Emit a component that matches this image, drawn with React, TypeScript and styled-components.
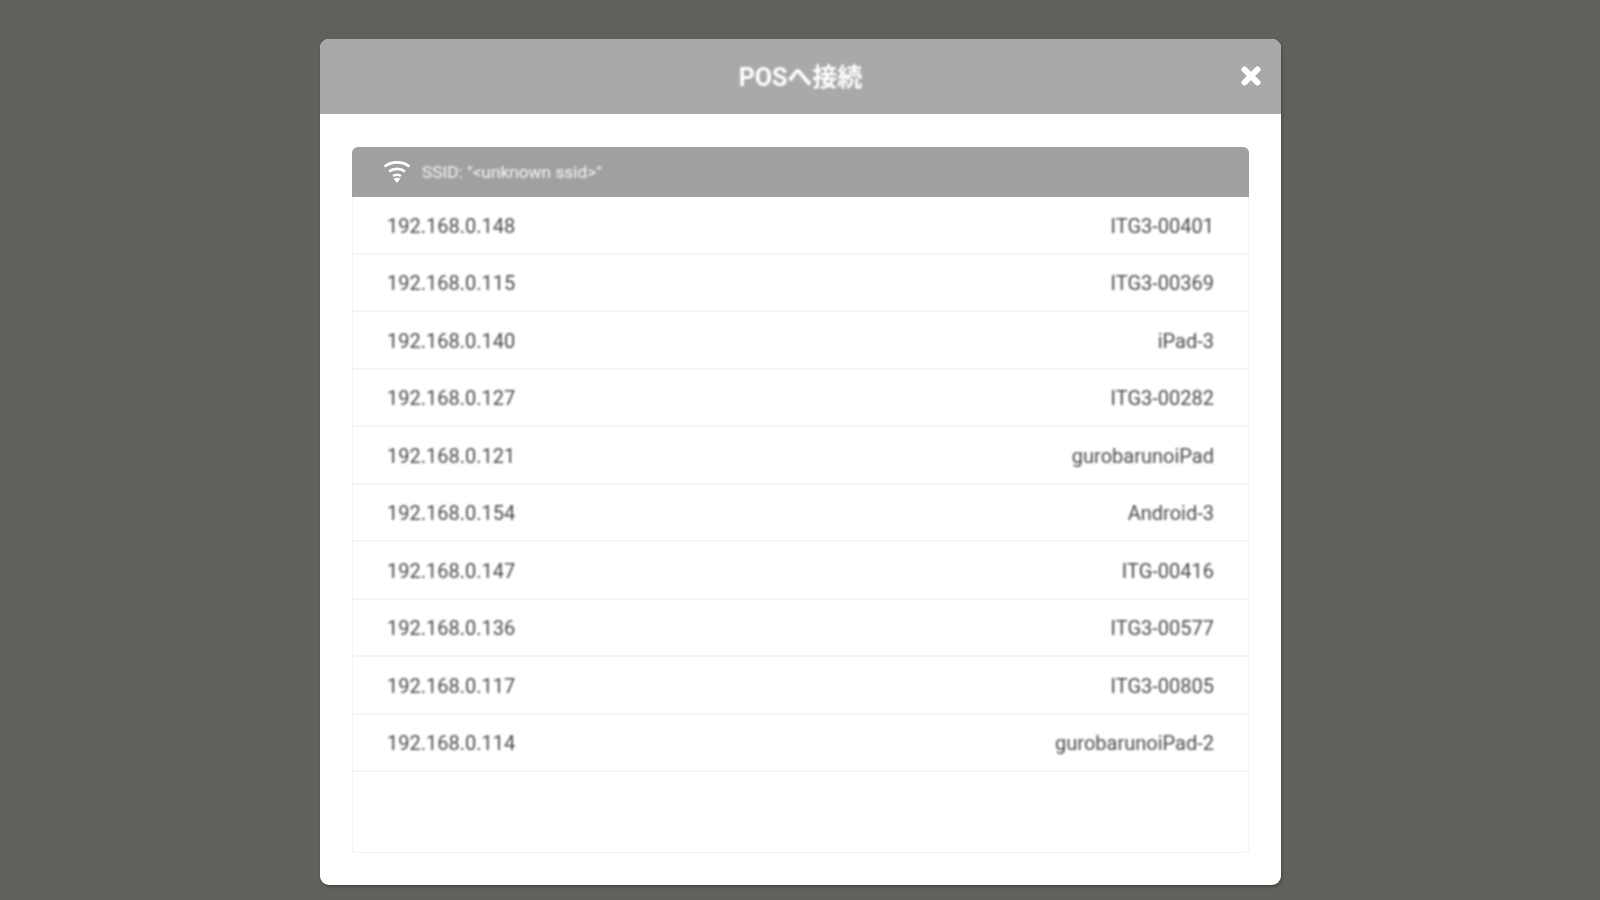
import React from 'react';
import styled, { createGlobalStyle } from 'styled-components';

const GlobalStyle = createGlobalStyle`
    html, body {
        margin: 0;
        height: 100%;
        background: #60615b;
        overflow: hidden;
    }
    #root {
        height: 100%;
    }
`

const Page = styled.div`
    display: flex;
    justify-content: center;
    width: 1600px;
    height: 900px;
    padding: 39px 319px 15px 320px;
    box-sizing: border-box;
    background: #60615b;
    font-family: Roboto, "Noto Sans CJK JP", sans-serif;
`

const Modal = styled.div`
    display: flex;
    flex-direction: column;
    flex: 1;
    background: #ffffff;
    border-radius: 9px;
    overflow: hidden;
    box-shadow: 1px 2px 3px rgba(0, 0, 0, 0.25);
`

const ModalHeader = styled.div`
    position: relative;
    display: flex;
    align-items: center;
    justify-content: center;
    height: 75px;
    padding-bottom: 4px;
    box-sizing: border-box;
    flex-shrink: 0;
    background: #a9a9a9;
    color: #ffffff;
    font-size: 25px;
    font-weight: 700;
`

const TitleText = styled.span`
    filter: blur(0.8px);
`

const CloseButton = styled.div`
    position: absolute;
    top: 26px;
    right: 19px;
    display: flex;
    filter: blur(0.5px);
`

const Body = styled.div`
    display: flex;
    flex: 1;
    padding: 33px 32px 32px 32px;
`

const ListPanel = styled.div`
    display: flex;
    flex-direction: column;
    flex: 1;
    border: 1px solid #f3f3f3;
    border-top: none;
    border-radius: 6px 6px 3px 3px;
`

const SsidBar = styled.div`
    display: flex;
    align-items: center;
    gap: 11px;
    height: 50px;
    margin: 0 -1px;
    padding-left: 31px;
    flex-shrink: 0;
    background: #a0a0a0;
    border-radius: 6px 6px 0 0;
    color: #f6f6f6;
    font-size: 17.3px;
`

const SsidText = styled.span`
    filter: blur(0.8px);
`

const WifiWrap = styled.span`
    display: flex;
    filter: blur(0.4px);
`

const Row = styled.div`
    display: flex;
    align-items: center;
    justify-content: space-between;
    height: 57.5px;
    box-sizing: border-box;
    padding: 2px 34px 0;
    border-bottom: 2px solid #f5f5f5;
    color: #4a4a4a;
    font-size: 20px;
`

const RowText = styled.span`
    filter: blur(0.8px);
`

const devices = [
    { ip: '192.168.0.148', name: 'ITG3-00401' },
    { ip: '192.168.0.115', name: 'ITG3-00369' },
    { ip: '192.168.0.140', name: 'iPad-3' },
    { ip: '192.168.0.127', name: 'ITG3-00282' },
    { ip: '192.168.0.121', name: 'gurobarunoiPad' },
    { ip: '192.168.0.154', name: 'Android-3' },
    { ip: '192.168.0.147', name: 'ITG-00416' },
    { ip: '192.168.0.136', name: 'ITG3-00577' },
    { ip: '192.168.0.117', name: 'ITG3-00805' },
    { ip: '192.168.0.114', name: 'gurobarunoiPad-2' },
]

const WifiIcon = () => (
    <svg width="28" height="24" viewBox="0 0 28 24" fill="none" stroke="#ffffff" strokeWidth="2.6">
        <path d="M1.5 6.5 C8.5 1 19.5 1 26.5 6.5" />
        <path d="M6 11.5 C10.5 8 17.5 8 22 11.5" />
        <path d="M10 16 C12.5 14.4 15.5 14.4 18 16" />
        <path d="M10.5 18.5 L14 23 L17.5 18.5 C15 17.6 13 17.6 10.5 18.5 Z" fill="#ffffff" stroke="none" />
    </svg>
)

const CloseIcon = () => (
    <svg width="22" height="22" viewBox="0 0 22 22" fill="none" stroke="#ffffff" strokeWidth="6" strokeLinecap="round">
        <path d="M4.5 4.5 L17.5 17.5 M17.5 4.5 L4.5 17.5" />
    </svg>
)

export default function App() {
    return (
        <Page>
            <GlobalStyle />
            <Modal>
                <ModalHeader>
                    <TitleText>POSへ接続</TitleText>
                    <CloseButton><CloseIcon /></CloseButton>
                </ModalHeader>
                <Body>
                    <ListPanel>
                        <SsidBar>
                            <WifiWrap><WifiIcon /></WifiWrap>
                            <SsidText>SSID: "&lt;unknown ssid&gt;"</SsidText>
                        </SsidBar>
                        {devices.map((d) => (
                            <Row key={d.ip}>
                                <RowText>{d.ip}</RowText>
                                <RowText>{d.name}</RowText>
                            </Row>
                        ))}
                    </ListPanel>
                </Body>
            </Modal>
        </Page>
    )
}
